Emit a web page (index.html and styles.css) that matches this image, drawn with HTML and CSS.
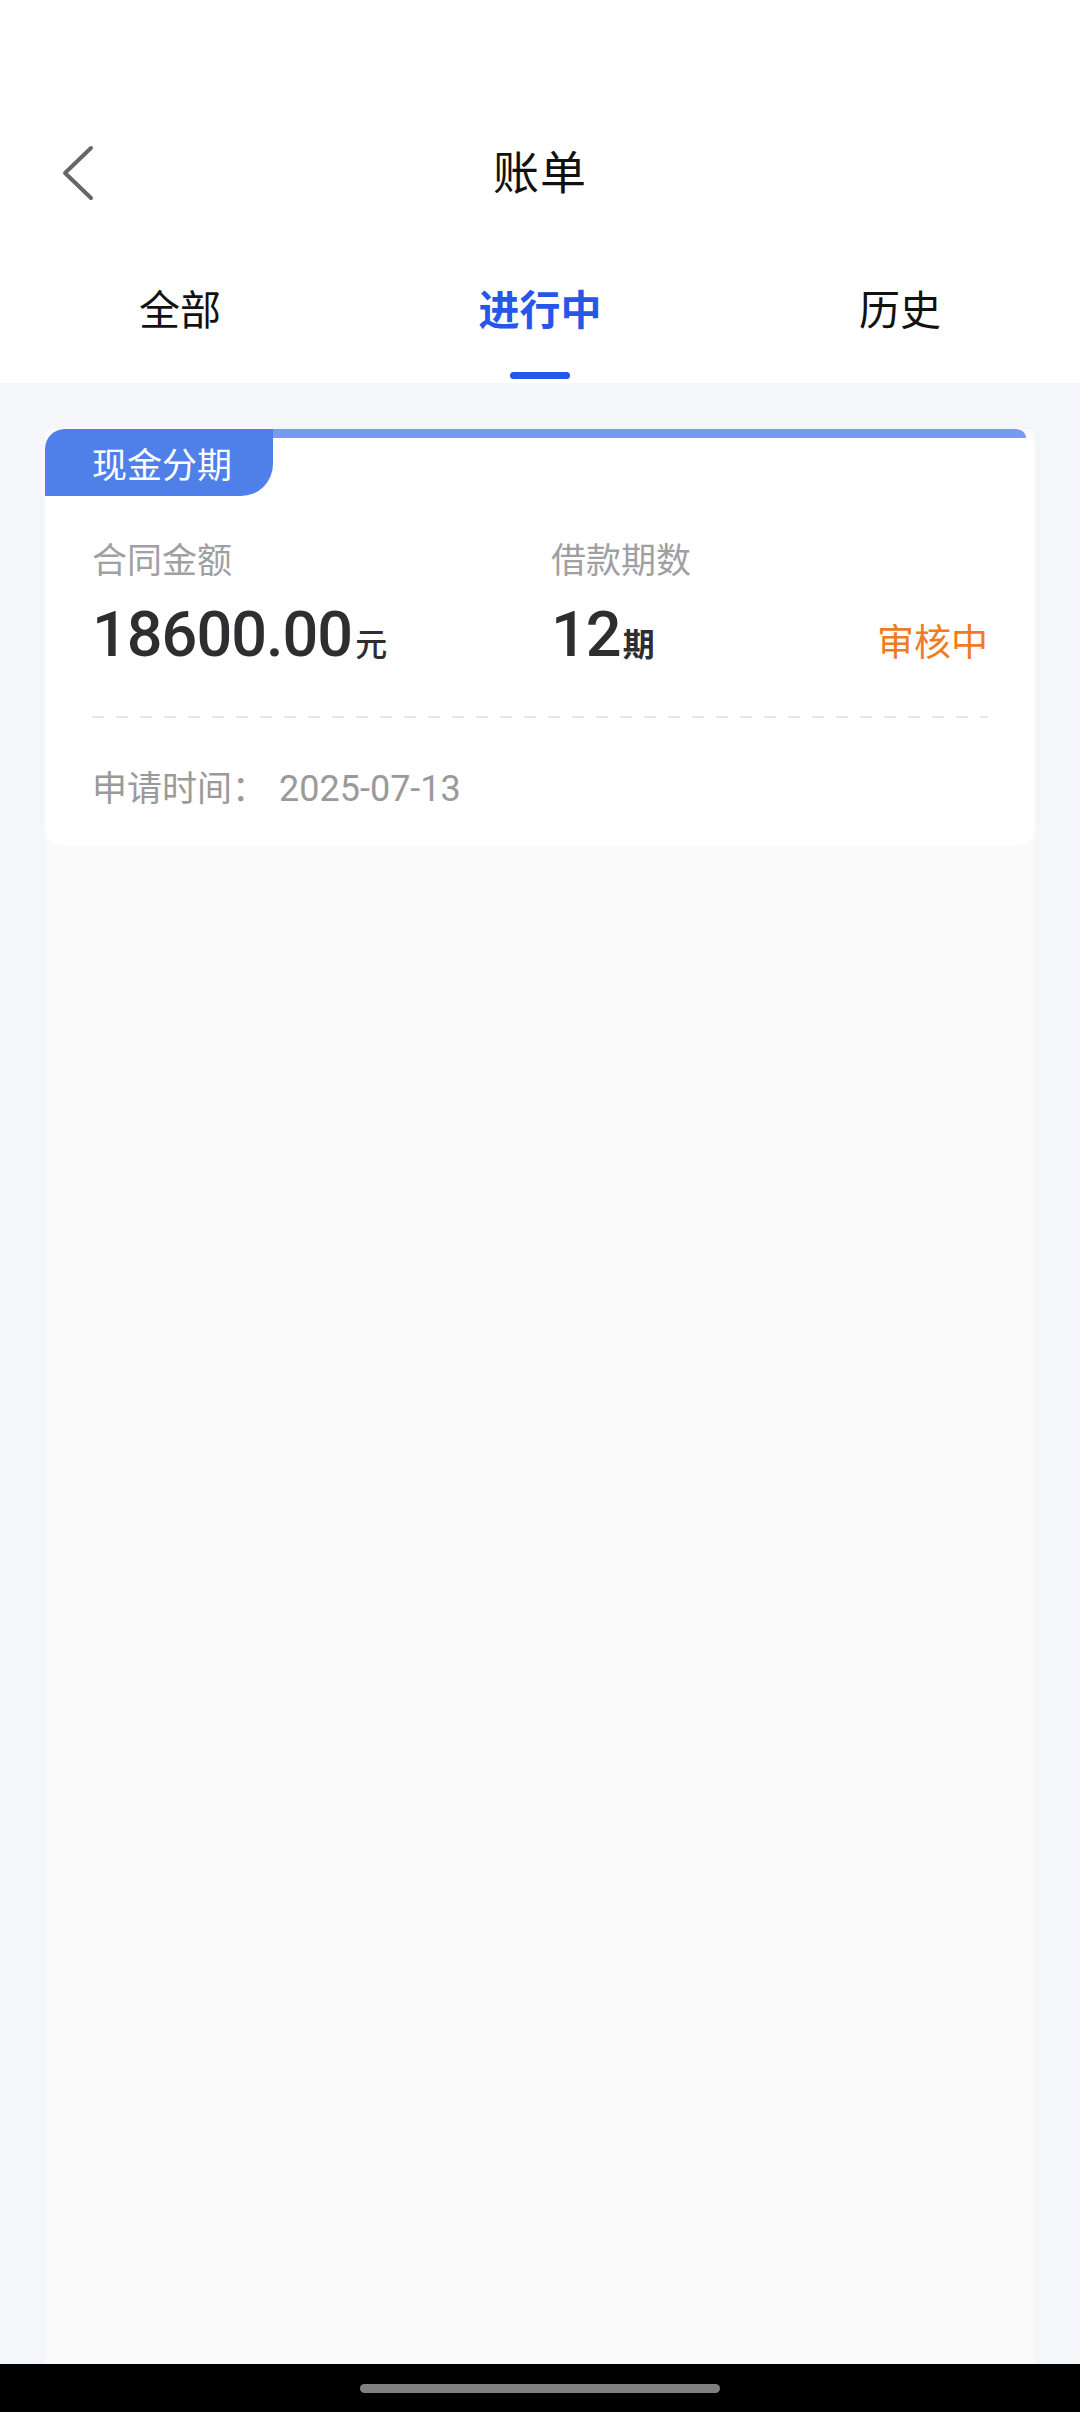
FILE: index.html
```html
<!DOCTYPE html>
<html lang="zh-CN">
<head>
<meta charset="utf-8">
<title>账单</title>
<link rel="stylesheet" href="styles.css">
</head>
<body>
<div class="screen">
  <header class="top">
    <div class="statusbar"></div>
    <div class="navbar">
      <div class="nav-left">
        <svg class="back" width="40" height="60" viewBox="0 0 40 60">
          <path d="M30 6 L4 31 L30 56" fill="none" stroke="#666" stroke-width="4" stroke-linecap="round" stroke-linejoin="round"/>
        </svg>
      </div>
      <div class="nav-title">账单</div>
      <div class="nav-right"></div>
    </div>
    <nav class="tabs">
      <div class="tab">全部</div>
      <div class="tab active">进行中<span class="indicator"></span></div>
      <div class="tab">历史</div>
    </nav>
  </header>
  <main class="content">
    <div class="panel">
      <section class="card">
        <div class="card-head">
          <div class="tag">现金分期</div>
          <div class="strip"></div>
        </div>
        <div class="card-body">
          <div class="stats">
            <div class="label">合同金额</div>
            <div class="label">借款期数</div>
            <div></div>
            <div class="value"><span class="num">18600.00</span><span class="unit">元</span></div>
            <div class="value"><span class="num">12</span><span class="unit bold">期</span></div>
            <div class="status">审核中</div>
          </div>
          <div class="dash"></div>
          <div class="date-row">
            <span class="date-label">申请时间：</span><span class="date">2025-07-13</span>
          </div>
        </div>
      </section>
    </div>
  </main>
  <footer class="navbar-sys"><span class="pill"></span></footer>
</div>
</body>
</html>
```
FILE: styles.css
```css
* { box-sizing: border-box; }
html, body { margin: 0; padding: 0; }
body {
  width: 1080px;
  height: 2412px;
  font-family: "Noto Sans CJK SC", "Noto Sans", sans-serif;
  background: #ffffff;
}
.screen {
  width: 1080px;
  height: 2412px;
  display: flex;
  flex-direction: column;
}
.top { background: #ffffff; }
.statusbar { height: 127px; }
.navbar {
  height: 84px;
  display: grid;
  grid-template-columns: 1fr auto 1fr;
  align-items: center;
}
.nav-left { padding-left: 61px; display: flex; align-items: center; }
.back { display: block; margin-top: 6px; }
.nav-title {
  font-size: 46px;
  line-height: 60px;
  color: #111;
  letter-spacing: 1px;
}
.tabs {
  display: grid;
  grid-template-columns: repeat(3, 1fr);
  padding-top: 66px;
  height: 172px;
}
.tab {
  display: flex;
  flex-direction: column;
  align-items: center;
  font-size: 41px;
  line-height: 60px;
  color: #111;
}
.tab.active { color: #2657e9; font-weight: 700; }
.indicator {
  display: block;
  width: 60px;
  height: 7px;
  border-radius: 4px;
  background: #2657e9;
  margin-top: 35px;
}
.content {
  flex: 1;
  background: #f4f6fa;
  padding: 46px 45px 0;
  display: flex;
}
.panel {
  flex: 1;
  background: #fafafa;
}
.card {
  background: #ffffff;
  border-radius: 20px;
  overflow: hidden;
  padding-bottom: 32px;
}
.card-head {
  display: flex;
  align-items: flex-start;
  height: 67px;
}
.tag {
  width: 228px;
  height: 67px;
  background: #4f80ea;
  color: #ffffff;
  font-size: 35px;
  line-height: 67px;
  padding-left: 47px;
  border-radius: 0 0 32px 0;
}
.strip {
  flex: 1;
  height: 9px;
  background: #7a99f7;
  margin-right: 9px;
  border-top-right-radius: 9px;
}
.card-body { padding: 37px 47px 0; }
.stats {
  display: grid;
  grid-template-columns: 459px 1fr auto;
  row-gap: 17px;
  align-items: baseline;
}
.label {
  font-size: 35px;
  line-height: 50px;
  color: #9fa0a3;
}
.value {
  color: #2e2e30;
  line-height: 70px;
  height: 70px;
  white-space: nowrap;
}
.num {
  font-family: "Roboto", sans-serif;
  font-weight: 500;
  font-size: 63px;
  letter-spacing: -1px;
}
.unit {
  font-size: 32px;
  line-height: 1;
  font-weight: 500;
  margin-left: 3px;
}
.unit.bold { font-weight: 700; margin-left: 2px; }
.status {
  font-size: 37px;
  line-height: 1;
  color: #f07b22;
  justify-self: end;
}
.dash {
  margin-top: 46px;
  height: 2px;
  background: repeating-linear-gradient(to right, #e6e6e6 0 12px, transparent 12px 24px);
}
.date-row {
  margin-top: 43px;
  font-size: 35px;
  line-height: 50px;
  color: #9a9a9a;
}
.date {
  font-family: "Roboto", sans-serif;
  font-size: 36px;
  margin-left: 12px;
}
.navbar-sys {
  height: 48px;
  background: #000;
  display: flex;
  justify-content: center;
  align-items: center;
}
.pill {
  width: 360px;
  height: 9px;
  border-radius: 5px;
  background: #808080;
}
```
